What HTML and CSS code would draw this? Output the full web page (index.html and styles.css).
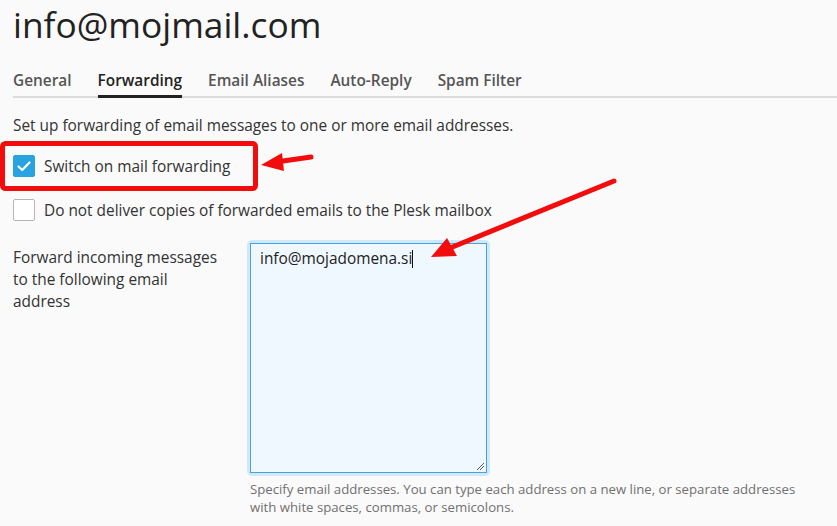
FILE: index.html
```html
<!DOCTYPE html>
<html lang="en">

<head>
  <meta charset="UTF-8">
  <title>info@mojmail.com - Forwarding</title>
  <link rel="stylesheet" href="styles.css">
</head>

<body>
  <div class="page">
    <h1 class="title">info@mojmail.com</h1>

    <div class="tabs">
      <span class="tab">General</span>
      <span class="tab active">Forwarding</span>
      <span class="tab">Email Aliases</span>
      <span class="tab">Auto-Reply</span>
      <span class="tab">Spam Filter</span>
    </div>

    <p class="intro">Set up forwarding of email messages to one or more email addresses.</p>

    <label class="check first">
      <span class="box checked">
        <svg width="14" height="11" viewBox="0 0 14 11"><path d="M1.5 5.5 L5.2 9 L12.5 1.5" fill="none" stroke="#fff" stroke-width="2.2" stroke-linecap="round" stroke-linejoin="round"/></svg>
      </span>
      Switch on mail forwarding
    </label>

    <label class="check second">
      <span class="box"></span>
      Do not deliver copies of forwarded emails to the Plesk mailbox
    </label>

    <div class="field">
      <div class="field-label">Forward incoming messages to the following email address</div>
      <div class="field-input">
        <div class="textarea-wrap">
          <div class="textarea">info@mojadomena.si<span class="caret"></span>
            <svg class="grip" width="10" height="10" viewBox="0 0 10 10"><path d="M9 2 L2 9 M9 5 L5 9" stroke="#555" stroke-width="1"/></svg>
          </div>
        </div>
        <div class="hint">Specify email addresses. You can type each address on a new line, or separate addresses with white spaces, commas, or semicolons.</div>
      </div>
    </div>
  </div>

  <!-- annotations drawn over the screenshot -->
  <svg class="marks" width="837" height="526" viewBox="0 0 837 526">
    <rect x="2.5" y="143.5" width="253" height="45" rx="3" fill="none" stroke="#f20c0c" stroke-width="5"/>
    <line x1="311" y1="157" x2="276" y2="162" stroke="#f20c0c" stroke-width="5" stroke-linecap="round"/>
    <polygon points="261,165 282,153 284,171" fill="#f20c0c"/>
    <line x1="614" y1="181" x2="450" y2="248" stroke="#f20c0c" stroke-width="5" stroke-linecap="round"/>
    <polygon points="431,257 447,238 457,256" fill="#f20c0c"/>
  </svg>
</body>

</html>
```

FILE: styles.css
```css
body {
  margin: 0;
  padding: 0;
  background: #fafafa;
  font-family: 'Open Sans', sans-serif;
  color: #333;
}

.page {
  padding-left: 13px;
}

.title {
  margin: 0;
  padding-top: 1px;
  font-size: 35.3px;
  font-weight: 400;
  line-height: 46px;
  color: #222;
}

.tabs {
  display: flex;
  gap: 26px;
  margin-top: 23px;
  border-bottom: 2px solid #dcdcdc;
}

.tab {
  font-size: 15.4px;
  font-weight: 600;
  color: #555;
  line-height: 22px;
  padding-bottom: 3px;
  margin-bottom: -2px;
  border-bottom: 3px solid transparent;
}

.tab.active {
  color: #222;
  border-bottom-color: #222;
}

.intro {
  margin: 17px 0 0;
  font-size: 15.4px;
  line-height: 22px;
  color: #333;
}

.check {
  display: flex;
  align-items: center;
  gap: 9px;
  font-size: 15.4px;
  color: #333;
  height: 22px;
}

.check.first {
  margin-top: 18px;
}

.check.second {
  margin-top: 22px;
}

.box {
  box-sizing: border-box;
  width: 22px;
  height: 22px;
  border: 1px solid #b5b5b5;
  border-radius: 2px;
  background: #fff;
  display: flex;
  align-items: center;
  justify-content: center;
}

.box.checked {
  background: #27a3e0;
  border-color: #27a3e0;
}

.field {
  display: grid;
  grid-template-columns: 234px 1fr;
  margin-top: 19px;
}

.field-label {
  font-size: 15.4px;
  line-height: 22px;
  color: #333;
  padding-top: 7px;
  padding-right: 20px;
}

.textarea-wrap {
  width: 237px;
  padding: 3px;
  background: #cde9fb;
  border-radius: 5px;
}

.textarea {
  box-sizing: border-box;
  position: relative;
  height: 230px;
  border: 1px solid #4aa3d6;
  background: #f0f8ff;
  font-size: 15.4px;
  line-height: 22px;
  color: #222;
  padding: 4px 9px;
}

.caret {
  display: inline-block;
  width: 1px;
  height: 18px;
  background: #111;
  vertical-align: -4px;
}

.grip {
  position: absolute;
  right: 1px;
  bottom: 1px;
}

.hint {
  margin-top: 4px;
  margin-left: 3px;
  font-size: 13.2px;
  line-height: 18px;
  color: #707070;
  width: 560px;
}

.marks {
  position: absolute;
  left: 0;
  top: 0;
  pointer-events: none;
}
```
